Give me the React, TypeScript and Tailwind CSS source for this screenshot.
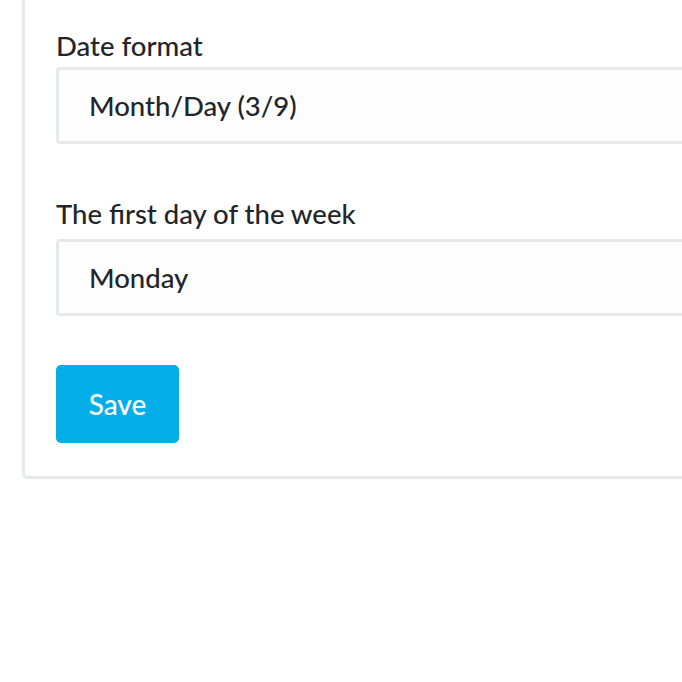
export default function App() {
  return (
    <div className="w-[682px] h-[682px] overflow-hidden bg-white" style={{ fontFamily: 'Lato, "Noto Sans", sans-serif' }}>
      <div className="ml-[22px] w-[720px] border-l-[3px] border-b-[3px] border-[#e7eaed] rounded-bl-[5px] pl-[31px] pt-[29px] pb-[33px] font-medium">
        <div className="text-[27.5px] leading-[34px] text-[#222529]">Date format</div>
        <div className="mt-[4px] h-[77px] border-[3px] border-[#e7eaed] rounded-[4px] bg-[#fdfdfd] flex items-center pl-[30px] text-[27.5px] text-[#222529]">
          Month/Day (3/9)
        </div>
        <div className="mt-[53px] text-[27.5px] leading-[34px] text-[#222529]">The first day of the week</div>
        <div className="mt-[8px] h-[77px] border-[3px] border-[#e7eaed] rounded-[4px] bg-[#fdfdfd] flex items-center pl-[30px] text-[27.5px] text-[#222529]">
          Monday
        </div>
        <button className="mt-[49px] w-[123px] h-[78px] rounded-[5px] bg-[#03aee9] text-white text-[28px] flex items-center justify-center">
          Save
        </button>
      </div>
    </div>
  );
}
